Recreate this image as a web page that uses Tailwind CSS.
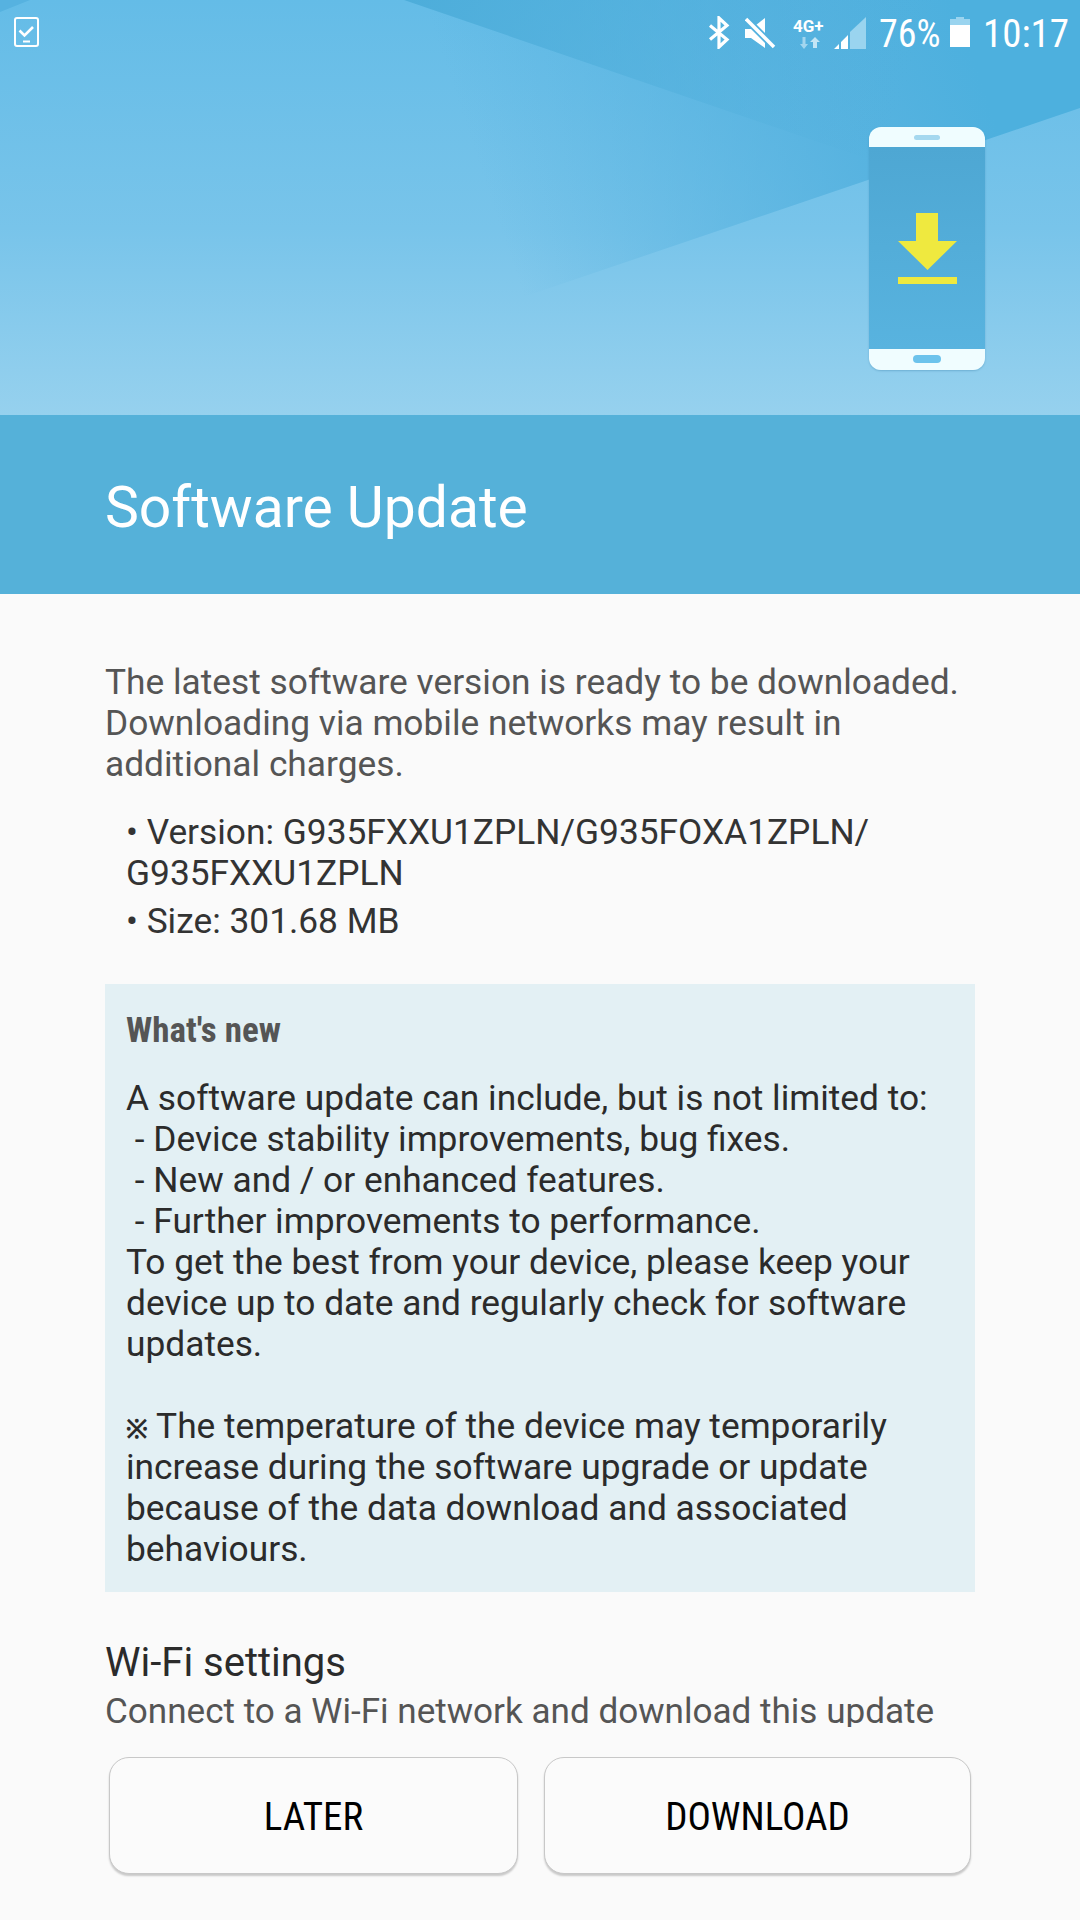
<!DOCTYPE html>
<html><head><meta charset="utf-8">
<script src="https://cdn.jsdelivr.net/npm/@tailwindcss/browser@4"></script>
</head>
<body class="m-0">
<div class="w-[1080px] h-[1920px] bg-[#fafafa] flex flex-col overflow-hidden font-['Roboto',sans-serif]">
  <!-- Banner -->
  <div class="relative h-[415px] shrink-0 bg-gradient-to-b from-[#64bce7] via-[#78c4ea] via-55% to-[#96d1ee] overflow-hidden">
    <svg class="absolute inset-0" width="1080" height="415" viewBox="0 0 1080 415">
      <defs>
        <linearGradient id="a" gradientUnits="userSpaceOnUse" x1="523" y1="297" x2="1000" y2="135"><stop offset="0" stop-color="#52b0de" stop-opacity="0"/><stop offset="0.7" stop-color="#52b0de" stop-opacity="0.8"/><stop offset="1" stop-color="#4db0de" stop-opacity="1"/></linearGradient>
        <linearGradient id="b" gradientUnits="userSpaceOnUse" x1="404" y1="0" x2="880" y2="165"><stop offset="0" stop-color="#4dadda" stop-opacity="1"/><stop offset="1" stop-color="#4dadda" stop-opacity="0"/></linearGradient>
      </defs>
      <polygon points="0,0 30,0 0,12" fill="#56b2e0"/>
      <polygon points="404,0 1080,0 1080,108 523,297" fill="url(#a)"/>
      <polygon points="404,0 1080,0 1080,108 900,170" fill="url(#b)"/>
    </svg>
    <!-- status bar -->
    <div class="absolute inset-x-0 top-0 h-[64px]">
      <svg class="absolute left-[14px] top-[17px]" width="25" height="30" viewBox="0 0 25 30" fill="none" stroke="#fff">
        <rect x="1" y="1" width="23" height="28" rx="2" stroke-width="2"/>
        <path d="M5.500 13.500L10.500 18.500L19 10" stroke-width="2.600"/>
        <path d="M9 24.500H16" stroke-width="2"/>
      </svg>
      <svg class="absolute left-[708px] top-[16px]" width="22" height="33" viewBox="0 0 22 33" fill="none" stroke="#fff" stroke-width="3.200">
        <path d="M2 9.500L19 23.500L11 31V2L19 9.500L2 23.500"/>
      </svg>
      <svg class="absolute left-[745px] top-[17px]" width="31" height="32" viewBox="0 0 31 32">
        <path d="M0 12H6L20 1V31L6 21H0Z" fill="#fff"/>
        <path d="M1 2L30 31" stroke="#53b1df" stroke-width="7"/>
        <path d="M1 2L29 30" stroke="#fff" stroke-width="3.500"/>
      </svg>
      <span class="absolute left-[793px] top-[17px] text-[17px] leading-[18px] font-bold text-white">4G+</span>
      <svg class="absolute left-[800px] top-[37px]" width="20" height="13" viewBox="0 0 20 13" fill="#a3d6ef">
        <path d="M2.500 0H5.500V7H8L4 12L0 7H2.500Z"/>
        <path d="M13 5H10L15 0L20 5H17V11H13Z" fill="#c4e5f5"/>
      </svg>
      <svg class="absolute left-[834px] top-[17px]" width="32" height="32" viewBox="0 0 32 32">
        <path d="M16 15L32 0V32H16Z" fill="#9ad4ef"/>
        <path d="M0 32L5 27V32ZM7 32V25L14 18V32Z" fill="#fff"/>
      </svg>
      <span class="absolute left-[879px] top-[12px] text-[38px] leading-[44px] font-normal text-white [font-stretch:85%]">76%</span>
      <svg class="absolute left-[950px] top-[17px]" width="20" height="30" viewBox="0 0 20 30">
        <path d="M0 2H6V0H14V2H20V8H0Z" fill="#9ad4ef"/>
        <rect y="8" width="20" height="22" fill="#fff"/>
      </svg>
      <span class="absolute left-[983px] top-[12px] text-[39px] leading-[44px] font-normal text-white [font-stretch:85%]">10:17</span>
    </div>
    <!-- phone -->
    <div class="absolute left-[869px] top-[127px] w-[116px] h-[243px] rounded-[12px] overflow-hidden flex flex-col shadow-[0_1px_2px_rgba(60,130,170,0.4)]">
      <div class="h-[20px] bg-[#f0fdff] flex justify-center pt-[8px]"><div class="w-[26px] h-[5px] rounded-full bg-[#a5d8ef]"></div></div>
      <div class="flex-1 bg-gradient-to-b from-[#4ea7d3] to-[#58b3df] flex flex-col items-center pt-[66px]">
        <svg width="59" height="71" viewBox="0 0 59 71" fill="#efe93f">
          <path d="M18 0H40V28H59L29.500 57L0 28H18Z"/>
          <rect y="64" width="59" height="7"/>
        </svg>
      </div>
      <div class="h-[21px] bg-[#f0fdff] flex justify-center pt-[6px]"><div class="w-[28px] h-[8px] rounded-full bg-[#6cc3ec]"></div></div>
    </div>
  </div>
  <!-- title band -->
  <div class="h-[179px] shrink-0 bg-[#55b1d9] flex items-center pl-[105px] pt-[6px]">
    <h1 class="text-[57px] leading-none font-normal text-white">Software Update</h1>
  </div>
  <!-- content -->
  <div class="flex-1 flex flex-col px-[105px] min-h-0">
    <div class="h-[1133px] overflow-hidden shrink-0 pt-[68px]">
      <p class="text-[35.300px] leading-[41px] text-[#555] whitespace-nowrap">The latest software version is ready to be downloaded.<br>Downloading via mobile networks may result in<br>additional charges.</p>
      <div class="mt-[27px] pl-[21px] text-[35.300px] leading-[41px] text-[#333] whitespace-nowrap">
        <p>• Version: G935FXXU1ZPLN/G935FOXA1ZPLN/<br>G935FXXU1ZPLN</p>
        <p class="mt-[7px]">• Size: 301.68 MB</p>
      </div>
      <div class="mt-[42px] h-[608px] bg-[#e3f0f4] px-[21px] pt-[26px] whitespace-nowrap">
        <h2 class="text-[35px] leading-[41px] font-bold text-[#555] [font-stretch:75%]">What's new</h2>
        <p class="mt-[27px] text-[35.300px] leading-[41px] text-[#2b2b2b]">A software update can include, but is not limited to:<br>&nbsp;- Device stability improvements, bug fixes.<br>&nbsp;- New and / or enhanced features.<br>&nbsp;- Further improvements to performance.<br>To get the best from your device, please keep your<br>device up to date and regularly check for software<br>updates.<br><br><span class="text-[26px] leading-none font-bold">※</span> The temperature of the device may temporarily<br>increase during the software upgrade or update<br>because of the data download and associated<br>behaviours.</p>
      </div>
      <h3 class="mt-[47px] text-[40px] leading-[48px] font-normal text-[#2b2b2b]">Wi-Fi settings</h3>
      <p class="mt-[4px] text-[35.100px] leading-[41px] text-[#555] whitespace-nowrap">Connect to a Wi-Fi network and download this update</p>
    </div>
    <div class="flex ml-[4px] mt-[30px] gap-[26px]">
      <button class="w-[409px] h-[117px] pt-[3px] rounded-[20px] border border-[#c8c8c8] bg-[#fbfbfb] shadow-[0_2px_2px_rgba(0,0,0,0.2)] text-[39px] text-black [font-stretch:75%]">LATER</button>
      <button class="w-[427px] h-[117px] pt-[3px] rounded-[20px] border border-[#c8c8c8] bg-[#fbfbfb] shadow-[0_2px_2px_rgba(0,0,0,0.2)] text-[39px] text-black [font-stretch:75%]">DOWNLOAD</button>
    </div>
  </div>
</div>
</body></html>
